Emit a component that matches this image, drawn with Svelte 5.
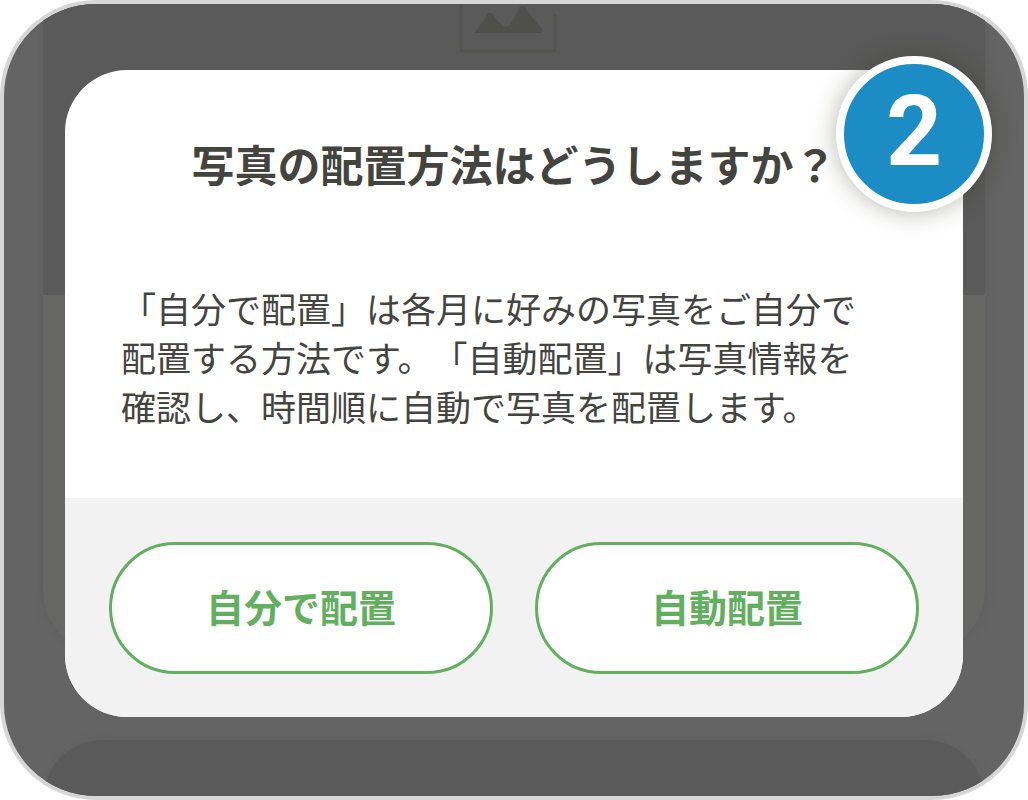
<script>
  const lines = [
    '「自分で配置」は各月に好みの写真をご自分で',
    '配置する方法です。「自動配置」は写真情報を',
    '確認し、時間順に自動で写真を配置します。'
  ];
  const choices = ['自分で配置', '自動配置'];
</script>

<main class="frame">
  <div class="backdrop" aria-hidden="true">
    <div class="sheet"><div class="preview"></div></div>
    <div class="next-sheet"></div>
    <svg class="picture" viewBox="0 0 98 50" width="98" height="50">
      <path d="M2 0V47H96V10" fill="none" stroke="#53534b" stroke-width="3" />
      <path d="M15 29L26 15L28 9H34L36 14L45 23L50 22L58 9L61 2H65L69 8L83 25V29Z" fill="#50504a" />
    </svg>
  </div>

  <div class="dialog" role="dialog" aria-labelledby="title" aria-describedby="description">
    <div class="content">
      <h1 id="title">写真の配置方法はどうしますか？</h1>
      <p id="description">
        {#each lines as line}<span>{line}</span>{/each}
      </p>
    </div>
    <div class="actions">
      {#each choices as choice}
        <button type="button">{choice}</button>
      {/each}
    </div>
    <span class="step">2</span>
  </div>
</main>

<style>
  :global(body) {
    background: #fff;
  }

  .frame {
    position: relative;
    box-sizing: border-box;
    min-height: 100vh;
    padding: 66px 61px 79px;
    border: 4px solid #d6d6d6;
    border-radius: 96px;
    overflow: hidden;
    background: #646464;
    font-family: "Noto Sans CJK JP", sans-serif;
    text-spacing-trim: space-all;
    color: #44443f;
  }

  .backdrop {
    position: absolute;
    inset: 0;
  }

  .sheet {
    position: absolute;
    top: 0;
    left: 39px;
    right: 39px;
    height: 650px;
    overflow: hidden;
    border-radius: 0 0 64px 64px;
    background: #666664;
    box-shadow: 0 0 10px #5e5e5e;
  }

  .preview {
    height: 291px;
    background: #5a5a5a;
  }

  .next-sheet {
    position: absolute;
    top: 736px;
    left: 39px;
    right: 39px;
    height: 120px;
    border-radius: 64px;
    background: #5a5a5a;
    box-shadow: 0 0 10px #606060;
  }

  .picture {
    position: absolute;
    top: 0;
    left: 50%;
    margin-left: -55px;
  }

  .dialog {
    position: relative;
    border-radius: 62px;
    background: #fff;
  }

  .content {
    padding: 61px 56px 68px;
  }

  h1 {
    margin: 0 0 88px;
    font-size: 43px;
    line-height: 64px;
    font-weight: 700;
    text-align: center;
    white-space: nowrap;
  }

  p {
    margin: 0;
    font-size: 35px;
    line-height: 49px;
  }

  p span {
    display: block;
    white-space: nowrap;
  }

  .actions {
    display: grid;
    grid-template-columns: 1fr 1fr;
    gap: 42px;
    padding: 44px 44px 43px;
    border-radius: 0 0 62px 62px;
    background: #f2f2f2;
  }

  button {
    height: 132px;
    padding: 0 0 6px;
    border: 3px solid #62af60;
    border-radius: 66px;
    background: #fff;
    color: #62af60;
    font: inherit;
    font-size: 38px;
    font-weight: 700;
    cursor: pointer;
  }

  .step {
    position: absolute;
    top: -14px;
    right: -29px;
    box-sizing: border-box;
    width: 156px;
    height: 156px;
    border: 8px solid #fff;
    border-radius: 50%;
    background: #1c8cc5;
    box-shadow: 0 0 24px rgb(40 40 20 / 35%);
    color: #fff;
    font-family: Roboto, sans-serif;
    font-size: 98px;
    font-weight: 700;
    line-height: 136px;
    text-align: center;
  }
</style>
